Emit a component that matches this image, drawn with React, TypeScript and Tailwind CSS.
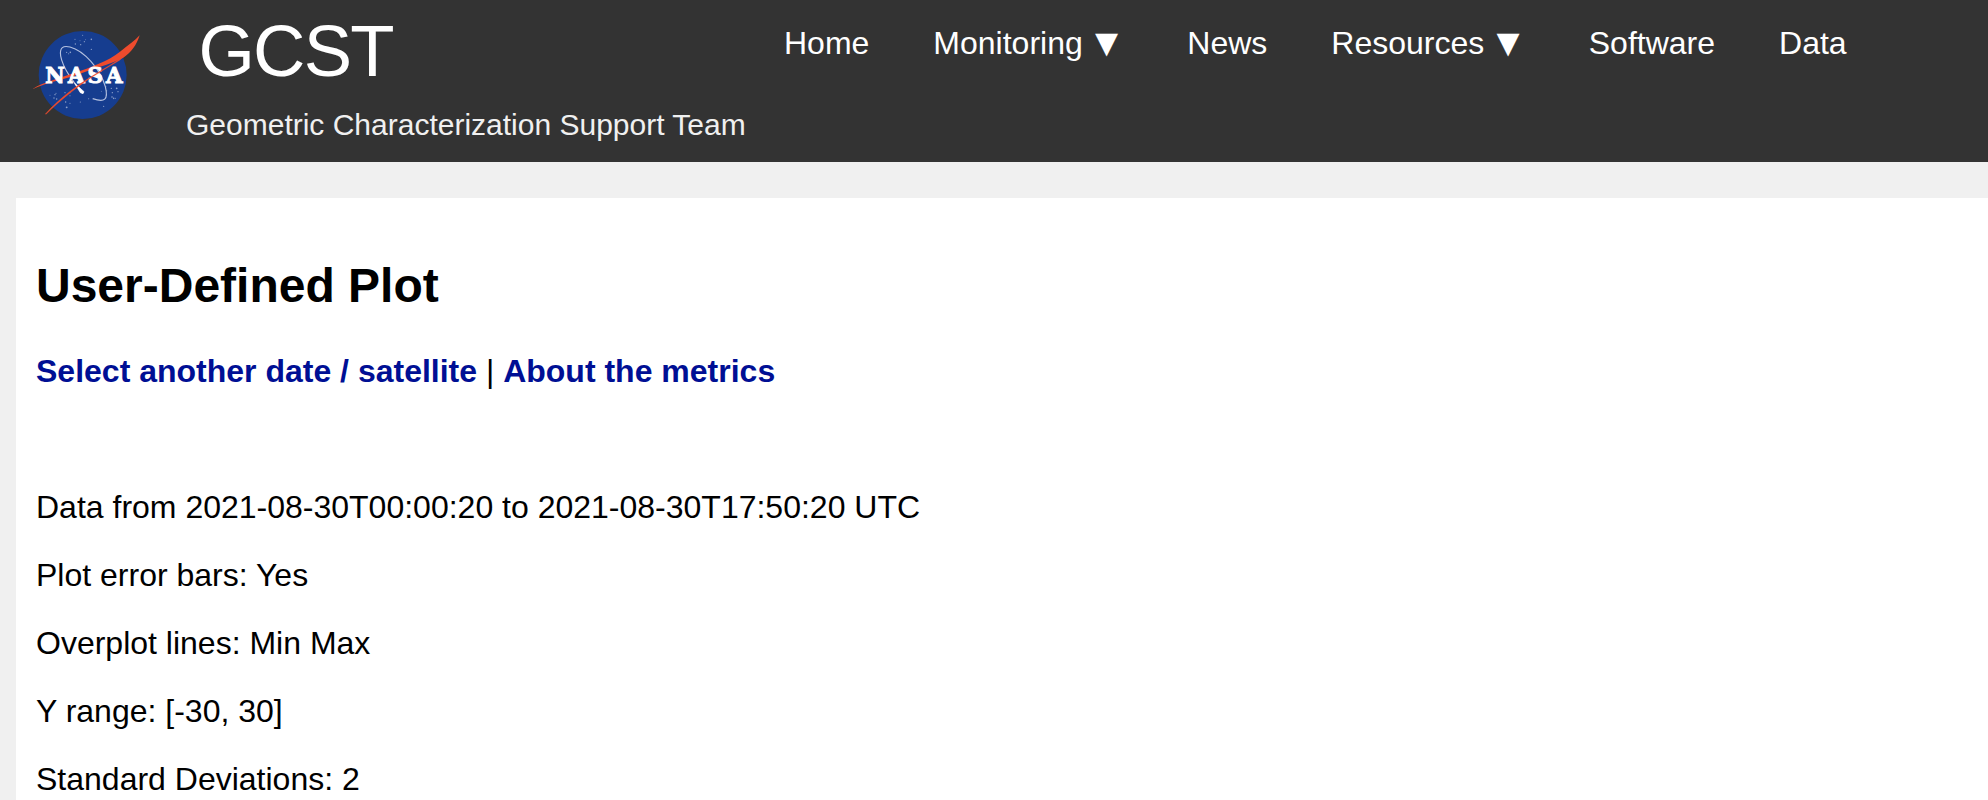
import React from "react";

const stars: [number, number, number][] = [
  [188, 46, 1.6], [165, 58, 1.6], [180, 62, 1.4], [214, 58, 2.4], [193, 65, 1.8], [197, 59, 1.4],
  [166, 72, 2], [182, 74, 2], [214, 88, 2], [140, 97, 1.8], [151, 97, 2.4], [146, 101, 1.6],
  [90, 226, 1.4], [105, 224, 2], [108, 220, 1.6], [102, 234, 2], [110, 237, 2.2], [135, 218, 1.8],
  [150, 227, 1.6], [151, 218, 1.4], [137, 246, 2.2], [150, 250, 1.6], [140, 262, 2.8], [181, 246, 1.8],
  [206, 236, 1.6], [251, 259, 1.8], [274, 205, 2], [290, 205, 2.6], [294, 215, 2], [277, 218, 2],
  [260, 212, 1.6], [276, 231, 2.2], [281, 235, 2.4], [286, 235, 1.6], [258, 200, 1.4], [244, 214, 1.4],
];

function NasaLogo() {
  return (
    <svg className="h-[110px] w-[130px] shrink-0" viewBox="0 0 390 330" role="img" aria-label="NASA">
      <circle cx="188" cy="165" r="132" fill="#163d8f" />
      {stars.map(([x, y, r], i) => (
        <circle key={i} cx={x} cy={y} r={r} fill="#8fa3cc" />
      ))}
      <path
        d="M190 219C160 190 128 142 122 108C118 82 130 76 150 81C192 92 240 146 256 200C266 240 254 248 218 236"
        fill="none"
        stroke="#b4c1e0"
        strokeWidth="3.5"
      />
      <path d="M164 190L192 215L189 221L181 218Z" fill="#fff" stroke="#fff" strokeWidth="2" />
      <path
        d="M39 206C72 186 110 178 160 160C215 140 262 125 300 95C325 76 344 62 359 46C350 75 334 97 310 113C270 134 215 146 160 169C115 182 76 190 39 207Z"
        fill="#ee4b2d"
      />
      <text
        x="76"
        y="188"
        textLength="232"
        lengthAdjust="spacing"
        className="font-['DejaVu_Serif',serif] text-[64px] font-bold"
        fill="#fff"
        stroke="#fff"
        strokeWidth="3"
      >
        NASA
      </text>
      <path
        d="M76 282C120 234 170 196 225 163C258 142 288 126 314 106L300 120C270 138 240 156 212 174C160 209 120 242 78 283Z"
        fill="#ee4b2d"
        stroke="#ee4b2d"
        strokeWidth="1"
      />
    </svg>
  );
}

const nav = [
  { label: "Home" },
  { label: "Monitoring", menu: true },
  { label: "News" },
  { label: "Resources", menu: true },
  { label: "Software" },
  { label: "Data" },
];

const details = [
  "Data from 2021-08-30T00:00:20 to 2021-08-30T17:50:20 UTC",
  "Plot error bars: Yes",
  "Overplot lines: Min Max",
  "Y range: [-30, 30]",
  "Standard Deviations: 2",
];

export default function App() {
  return (
    <div className="h-[800px] overflow-hidden bg-[#f0f0f0] font-['Liberation_Sans',Arial,sans-serif] text-[32px] leading-[36px] text-black">
      <header className="flex h-[162px] items-start bg-[#333333] text-white">
        <div className="pt-5 pl-5">
          <NasaLogo />
        </div>
        <div className="w-[634px] shrink-0 pl-9 whitespace-nowrap">
          <div className="pt-[11px] pl-[12.5px] text-[72.5px] leading-[80px] tracking-[-1.8px]">GCST</div>
          <div className="pt-[17px] text-[30px] leading-[34px] text-[#f0f0f0]">
            Geometric Characterization Support Team
          </div>
        </div>
        <nav className="flex gap-16 pt-[25px] whitespace-nowrap">
          {nav.map((item) => (
            <a key={item.label} href="#" className="flex gap-[9px]">
              {item.label}
              {item.menu && (
                <span className="flex h-9 w-[31.5px] justify-center pr-[2px] text-[39px]">▼</span>
              )}
            </a>
          ))}
        </nav>
      </header>
      <main className="mt-9 ml-4 h-[640px] bg-white pt-[60px] pl-5">
        <h1 className="text-[48px] leading-[55px] font-bold">User-Defined Plot</h1>
        <p className="mt-10">
          <a href="#" className="font-bold text-[#000f94]">Select another date / satellite</a>
          {" | "}
          <a href="#" className="font-bold text-[#000f94]">About the metrics</a>
        </p>
        <div className="mt-[100px] flex flex-col gap-8">
          {details.map((line) => (
            <p key={line}>{line}</p>
          ))}
        </div>
      </main>
    </div>
  );
}
